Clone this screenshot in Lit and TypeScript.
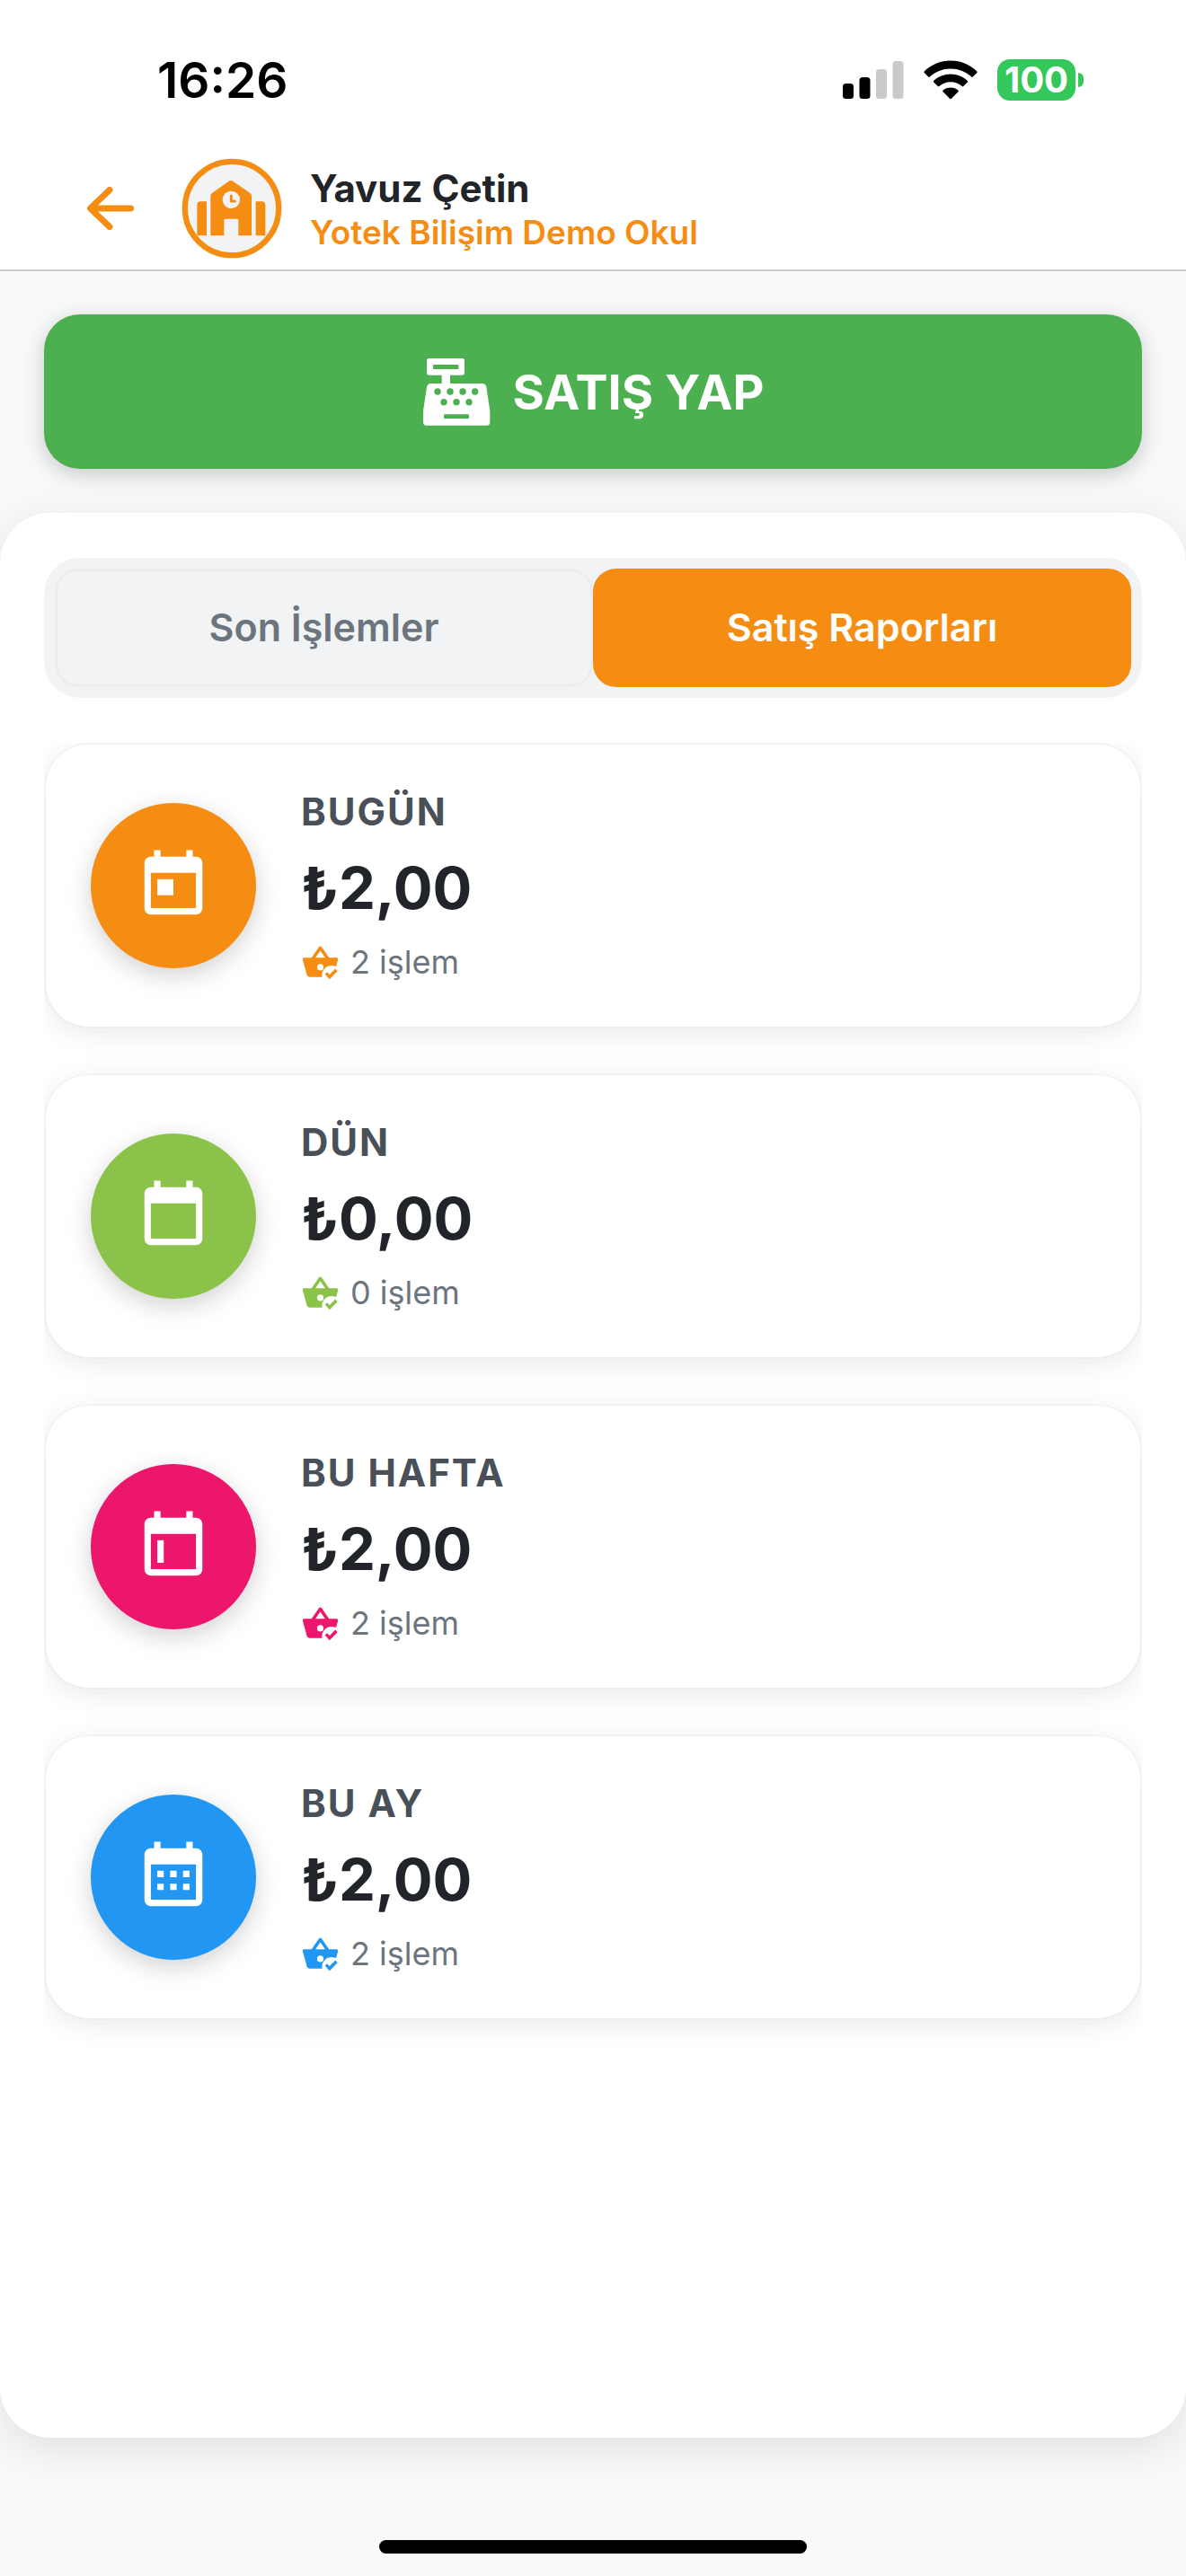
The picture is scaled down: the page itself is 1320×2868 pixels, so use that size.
import { LitElement, html, css, svg } from "lit";
import type { SVGTemplateResult } from "lit";
import { customElement, property, state } from "lit/decorators.js";
import { classMap } from "lit/directives/class-map.js";

type Tone = "orange" | "green" | "pink" | "blue";

interface Report {
  title: string;
  amount: string;
  count: number;
  tone: Tone;
  marks: SVGTemplateResult;
}

const REPORTS: Report[] = [
  { title: "BUGÜN", amount: "₺2,00", count: 2, tone: "orange", marks: svg`<path d="M7 10h5v5H7z"/>` },
  { title: "DÜN", amount: "₺0,00", count: 0, tone: "green", marks: svg`` },
  { title: "BU HAFTA", amount: "₺2,00", count: 2, tone: "pink", marks: svg`<path d="M7 10h2v7H7z"/>` },
  {
    title: "BU AY",
    amount: "₺2,00",
    count: 2,
    tone: "blue",
    marks: svg`<path d="M7 10h2v2H7zM11 10h2v2h-2zM15 10h2v2h-2zM7 14h2v2H7zM11 14h2v2h-2zM15 14h2v2h-2z"/>`,
  },
];

@customElement("status-bar")
class StatusBar extends LitElement {
  static styles = css`
    :host {
      display: block;
      color: #000;
    }
    .bar {
      display: flex;
      align-items: center;
      justify-content: space-between;
      padding: 56px 114px 0 175px;
      height: 66px;
    }
    .time {
      font-size: 55px;
      font-weight: 600;
      line-height: 66px;
    }
    .icons {
      display: flex;
      align-items: center;
    }
    .signal {
      width: 68px;
      height: 42px;
      margin-right: 22px;
    }
    .wifi {
      width: 60px;
      height: 44px;
      margin-right: 22px;
    }
    .battery {
      display: flex;
      align-items: center;
      gap: 3px;
    }
    .level {
      display: flex;
      align-items: center;
      justify-content: center;
      width: 87px;
      height: 46px;
      border-radius: 14px;
      background: #34c759;
      color: #fff;
      font-size: 40px;
      font-weight: 700;
      line-height: 46px;
    }
    .nub {
      width: 6px;
      height: 16px;
      border-radius: 0 8px 8px 0;
      background: #34c759;
    }
  `;

  render() {
    return html`
      <div class="bar">
        <div class="time">16:26</div>
        <div class="icons">
          <svg class="signal" viewBox="0 0 68 42" aria-hidden="true">
            <rect x="0" y="25" width="12" height="17" rx="3.5" />
            <rect x="18.5" y="18" width="12" height="24" rx="3.5" />
            <rect x="37" y="9" width="12" height="33" rx="3.5" fill="#cacaca" />
            <rect x="55.5" y="0" width="12" height="42" rx="3.5" fill="#cacaca" />
          </svg>
          <svg class="wifi" viewBox="0 0 60 44" aria-hidden="true">
            <path d="M30 0.5C41.5 0.5 51.8 5 59.3 12.4C59.8 12.9 59.8 13.5 59.3 14L54.8 18.5C54.3 19 53.7 19 53.2 18.5C47.1 12.8 39 9.4 30 9.4C21 9.4 12.9 12.8 6.8 18.5C6.3 19 5.7 19 5.2 18.5L0.7 14C0.2 13.5 0.2 12.9 0.7 12.4C8.2 5 18.5 0.5 30 0.5Z" />
            <path d="M30 15.5C37.3 15.5 43.9 18.3 48.8 22.9C49.3 23.4 49.3 24 48.8 24.5L44.2 29C43.7 29.5 43.2 29.5 42.7 29C39.3 26 34.9 24.2 30 24.2C25.1 24.2 20.7 26 17.3 29C16.8 29.5 16.3 29.5 15.8 29L11.2 24.5C10.7 24 10.7 23.4 11.2 22.9C16.1 18.3 22.7 15.5 30 15.5Z" />
            <path d="M30 30.4C33.3 30.4 36.3 31.6 38.5 33.5C39 34 39 34.6 38.6 35L31 42.8C30.4 43.4 29.6 43.4 29 42.8L21.4 35C21 34.6 21 34 21.5 33.5C23.7 31.6 26.7 30.4 30 30.4Z" />
          </svg>
          <div class="battery">
            <div class="level">100</div>
            <div class="nub"></div>
          </div>
        </div>
      </div>
    `;
  }
}

@customElement("report-card")
class ReportCard extends LitElement {
  @property({ attribute: false }) report!: Report;

  static styles = css`
    :host {
      display: block;
    }
    .card {
      display: flex;
      align-items: center;
      gap: 50px;
      padding: 48px 50px;
      border-radius: 48px;
      background: #fff;
      box-shadow: 0 0 0 2px rgba(0, 0, 0, 0.02), 0 6px 30px rgba(0, 0, 0, 0.09);
    }
    .orange { --tone: #f68d13; }
    .green { --tone: #8bc34a; }
    .pink { --tone: #ec176c; }
    .blue { --tone: #2296f3; }
    .badge {
      flex: none;
      display: flex;
      align-items: center;
      justify-content: center;
      width: 184px;
      height: 184px;
      border-radius: 50%;
      background: var(--tone);
      box-shadow: 0 8px 28px rgba(0, 0, 0, 0.18);
    }
    .calendar {
      width: 86px;
      height: 86px;
      fill: #fff;
    }
    .body {
      display: flex;
      flex-direction: column;
      gap: 14px;
    }
    .title {
      margin: 0;
      color: #495057;
      font-size: 42px;
      font-weight: 700;
      line-height: 54px;
      letter-spacing: 2px;
    }
    .amount {
      color: #212529;
      font-size: 65px;
      font-weight: 700;
      line-height: 88px;
    }
    .count {
      display: flex;
      align-items: center;
      gap: 12px;
      color: #6c757d;
      font-size: 36px;
      line-height: 48px;
    }
    .basket {
      width: 43px;
      height: 43px;
      fill: var(--tone);
    }
    .cutout {
      fill: #fff;
    }
  `;

  render() {
    const r = this.report;
    return html`
      <article class="card ${r.tone}">
        <div class="badge">
          <svg class="calendar" viewBox="0 0 24 24" aria-hidden="true">
            <path d="M19 19H5V8h14M16 1v2H8V1H6v2H5c-1.11 0-2 .89-2 2v14a2 2 0 0 0 2 2h14a2 2 0 0 0 2-2V5c0-1.11-.9-2-2-2h-1V1" />
            ${r.marks}
          </svg>
        </div>
        <div class="body">
          <h2 class="title">${r.title}</h2>
          <div class="amount">${r.amount}</div>
          <div class="count">
            <svg class="basket" viewBox="0 0 24 24" aria-hidden="true">
              <path d="M5.5 21c-.78 0-1.46-.45-1.79-1.1L1.1 10.44 1 10a1 1 0 0 1 1-1h4.58l4.6-6.57C11.36 2.17 11.66 2 12 2s.65.17.83.44L17.42 9H22a1 1 0 0 1 1 1l-.04.29-2.67 9.61c-.33.65-1.01 1.1-1.79 1.1h-13M12 4.74L9 9h6l-3-4.26M12 13a2 2 0 0 0-2 2 2 2 0 0 0 2 2 2 2 0 0 0 2-2 2 2 0 0 0-2-2z" />
              <circle class="cutout" cx="19" cy="20" r="6" />
              <path d="M17.75 22.4L14.9 19.3l1.3-1.3 1.55 1.55 3.6-3.6 1.35 1.5z" />
            </svg>
            <span>${r.count} işlem</span>
          </div>
        </div>
      </article>
    `;
  }
}

@customElement("app-root")
class AppRoot extends LitElement {
  @state() private tab = 1;

  static styles = css`
    :host {
      display: block;
      font-family: Inter, "Noto Sans", sans-serif;
    }
    button {
      font: inherit;
      border: 0;
      cursor: pointer;
    }
    .page {
      display: flex;
      flex-direction: column;
      min-height: 100vh;
      background: #f8f9fb;
    }
    .top {
      background: #fff;
      border-bottom: 2px solid #c9cccf;
    }
    .header {
      display: flex;
      align-items: center;
      padding: 54px 48px 12px 96px;
    }
    .back {
      display: flex;
      padding: 0;
      margin-right: 52px;
      background: none;
    }
    .arrow {
      width: 54px;
      height: 54px;
      fill: none;
      stroke: #f68d13;
      stroke-width: 7;
      stroke-linecap: round;
      stroke-linejoin: round;
    }
    .logo {
      width: 112px;
      height: 112px;
      margin-right: 31px;
    }
    .titles {
      padding-top: 4px;
    }
    .name {
      margin: 0;
      color: #212529;
      font-size: 42px;
      font-weight: 700;
      line-height: 50px;
    }
    .school {
      color: #f68d13;
      font-size: 37px;
      font-weight: 600;
      line-height: 48px;
    }
    .action {
      display: flex;
      padding: 48px 49px 49px;
    }
    .sell {
      flex: 1;
      display: flex;
      align-items: center;
      justify-content: center;
      gap: 25px;
      height: 172px;
      border-radius: 40px;
      background: #4caf50;
      color: #fff;
      font-size: 54px;
      font-weight: 700;
      box-shadow: 0 6px 24px rgba(0, 0, 0, 0.2);
    }
    .register {
      width: 76px;
      height: 76px;
      fill: #fff;
    }
    .hole {
      fill: #4caf50;
    }
    .panel {
      flex: 1;
      display: flex;
      flex-direction: column;
      gap: 50px;
      padding: 50px 49px 0;
      border-radius: 56px;
      background: #fff;
      box-shadow: 0 12px 48px rgba(0, 0, 0, 0.1);
    }
    .tabs {
      display: grid;
      grid-template-columns: 1fr 1fr;
      padding: 12px;
      border-radius: 40px;
      background: #f1f3f5;
    }
    .tab {
      height: 132px;
      padding: 0 0 2px;
      border: 3px solid #ebedef;
      border-radius: 26px;
      background: #f1f3f5;
      color: #6c757d;
      font-size: 43px;
      font-weight: 600;
      line-height: 50px;
    }
    .tab.on {
      border-color: #f68d13;
      background: #f68d13;
      color: #fff;
    }
    .list {
      flex: 1;
      display: flex;
      flex-direction: column;
      gap: 54px;
      padding: 2px;
      overflow: hidden;
    }
    .foot {
      display: flex;
      justify-content: center;
      padding: 114px 0 25px;
    }
    .home {
      width: 36%;
      height: 15px;
      border-radius: 8px;
      background: #000;
    }
  `;

  private renderTab(index: number, label: string) {
    const on = this.tab === index;
    return html`<button
      class=${classMap({ tab: true, on })}
      role="tab"
      aria-selected=${on ? "true" : "false"}
      @click=${() => (this.tab = index)}
    >${label}</button>`;
  }

  render() {
    return html`
      <div class="page">
        <div class="top">
          <status-bar></status-bar>
          <header class="header">
            <button class="back" aria-label="Geri">
              <svg class="arrow" viewBox="0 0 54 54" aria-hidden="true">
                <path d="M26 6.5L4.5 27L26 47.5M5 27H49.5" />
              </svg>
            </button>
            <svg class="logo" viewBox="66 49 336 336" aria-hidden="true">
              <circle cx="234" cy="217" r="156.5" fill="#f1f3f5" stroke="#f68d13" stroke-width="19" />
              <g fill="#f68d13">
                <path d="M163 176q0-7 6-11l54-38q8-6 16 0l55 38q6 4 6 11v132h-44v-51q0-5-5-5h-38q-5 0-5 5v51h-45z" />
                <path d="M118 206q0-12 12-12h20v114h-32zM314 194h20q12 0 12 12v102h-32z" />
              </g>
              <circle cx="232" cy="188" r="29" fill="#f1f3f5" />
              <path d="M232 175v18h12" fill="none" stroke="#f68d13" stroke-width="9" stroke-linecap="round" stroke-linejoin="round" />
            </svg>
            <div class="titles">
              <h1 class="name">Yavuz Çetin</h1>
              <div class="school">Yotek Bilişim Demo Okul</div>
            </div>
          </header>
        </div>

        <div class="action">
          <button class="sell">
            <svg class="register" viewBox="0 0 228 228" aria-hidden="true">
              <path d="M22 3h112q7 0 7 7v42q0 7-7 7H93v28h107q12 0 14 12l11 73q1 6 1 12v32q0 11-11 11H14q-11 0-11-11v-32q0-6 1-12l11-73q2-12 14-12h36V59H22q-7 0-7-7V10q0-7 7-7z" />
              <g class="hole">
                <rect x="36" y="24" width="85" height="15" rx="2" />
                <rect x="72" y="190" width="84" height="14" rx="3" />
                <circle cx="51" cy="114" r="11" />
                <circle cx="93" cy="114" r="11" />
                <circle cx="135" cy="114" r="11" />
                <circle cx="176" cy="114" r="11" />
                <circle cx="72" cy="149" r="11" />
                <circle cx="114" cy="149" r="11" />
                <circle cx="156" cy="149" r="11" />
              </g>
            </svg>
            <span>SATIŞ YAP</span>
          </button>
        </div>

        <main class="panel">
          <div class="tabs" role="tablist">
            ${this.renderTab(0, "Son İşlemler")} ${this.renderTab(1, "Satış Raporları")}
          </div>
          <div class="list">
            ${REPORTS.map((r) => html`<report-card .report=${r}></report-card>`)}
          </div>
        </main>

        <footer class="foot"><div class="home"></div></footer>
      </div>
    `;
  }
}
